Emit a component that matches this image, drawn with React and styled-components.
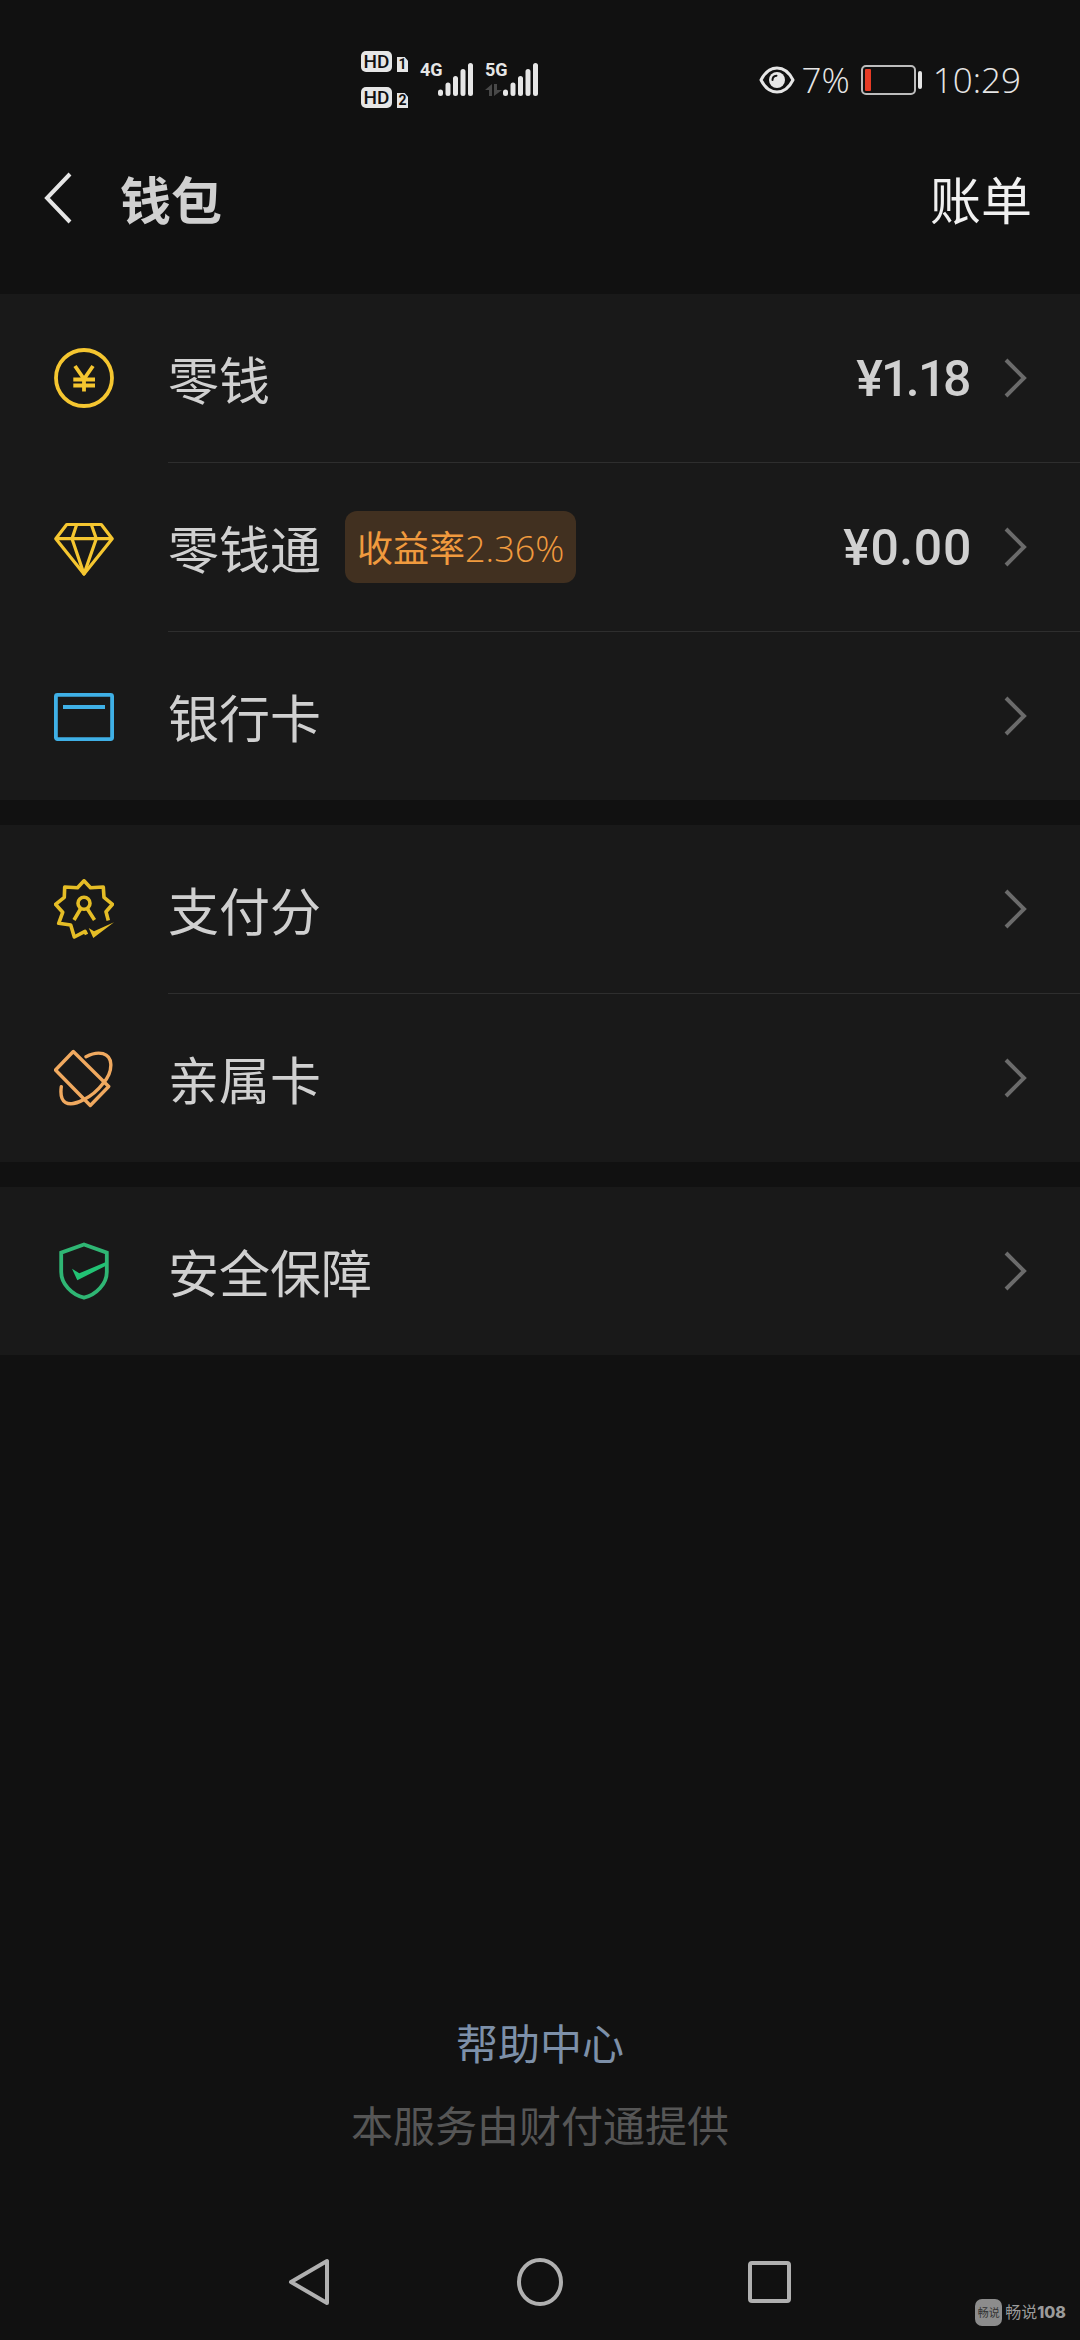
import React from 'react';
import styled, { createGlobalStyle } from 'styled-components';

const GlobalStyle = createGlobalStyle`
    * {
        box-sizing:border-box;
    }

    body {
        margin:0;
        background-color:#111111;
        color:#d0d0d0;
        font-family:"Noto Sans CJK SC", sans-serif;
    }

    button {
        border:0;
        padding:0;
        background:none;
        color:inherit;
        font:inherit;
        cursor:pointer;
    }
`

const Page = styled.div`
    position:relative;
    display:flex;
    flex-direction:column;
    min-height:100vh;
`

/* ---------- status bar ---------- */

const StatusBar = styled.div`
    display:flex;
    align-items:center;
    justify-content:space-between;
    height:120px;
    padding:39px 59px 0 361px;
    color:#e6e6e6;
`

const StatusGroup = styled.div`
    display:flex;
    align-items:center;
    gap:${props => props.$gap || 0}px;
`

const HdList = styled.div`
    display:grid;
    gap:15px;
    margin-right:12px;
`

const HdRow = styled.div`
    display:flex;
    align-items:flex-end;
    gap:5px;
`

const HdTag = styled.span`
    width:31px;
    border-radius:5px;
    background-color:#e6e6e6;
    color:#111111;
    font:500 19px/21px Roboto, sans-serif;
    text-align:center;
`

const SimTag = styled.span`
    width:11px;
    background-color:#e6e6e6;
    clip-path:polygon(0 0, 70% 0, 100% 25%, 100% 100%, 0 100%);
    color:#111111;
    font:700 14px/15px Roboto, sans-serif;
    text-align:center;
`

const Signal = styled.div`
    display:flex;
    margin-right:12px;
`

const SignalType = styled.div`
    display:flex;
    flex-direction:column;
    justify-content:space-between;
    width:18px;
    height:33px;
    font:700 18px/14px "Liberation Sans Narrow", Roboto, sans-serif;
`

const StatusText = styled.span`
    font:300 35px/40px "Open Sans", "Noto Sans", sans-serif;
`

/* ---------- title bar ---------- */

const Header = styled.header`
    display:flex;
    align-items:center;
    height:156px;
    margin-bottom:18px;
    padding:0 48px 0 42px;

    h1 {
        flex:1;
        margin:0 0 0 48px;
        font-size:51px;
        line-height:72px;
        font-weight:700;
    }
`

const BackButton = styled.button`
    display:flex;
    width:30px;
`

const BillButton = styled.button`
    && {
        color:#f0f0f0;
        font-size:51px;
        line-height:72px;
        font-weight:400;
    }
`

/* ---------- list ---------- */

const Sections = styled.main`
    display:grid;
    gap:25px;
`

const Section = styled.section`
    background-color:#191919;
`

const RowButton = styled.button`
    display:flex;
    align-items:flex-start;
    width:100%;
    text-align:left;

    &:last-child > div {
        border-bottom:0;
    }
`

const RowIcon = styled.span`
    display:flex;
    align-items:center;
    width:168px;
    height:168px;
    padding-left:54px;
`

const RowBody = styled.div`
    box-sizing:content-box;
    display:flex;
    flex:1;
    align-items:center;
    height:168px;
    padding-right:53px;
    border-bottom:1px solid #2e2e2e;
`

const RowLabel = styled.span`
    font-size:51px;
    line-height:72px;
`

const RateBadge = styled.span`
    margin-left:24px;
    padding:4px 12px 0;
    border-radius:12px;
    background-color:#413020;
    color:#f09a3e;
    font:300 36px/68px "Open Sans", "Noto Sans CJK SC", sans-serif;
`

const Cjk = styled.span`
    font-weight:400;
`

const Amount = styled.span`
    margin-left:auto;
    padding-top:2px;
    font:500 50px/72px Roboto, sans-serif;
    font-variant-numeric:proportional-nums;
`

const Arrow = styled.svg`
    margin-left:${props => (props.$pushed ? 'auto' : '32px')};
`

/* ---------- bottom ---------- */

const Footer = styled.footer`
    display:grid;
    justify-items:center;
    gap:22px;
    margin-top:auto;
    padding-bottom:70px;
    font-size:42px;
    line-height:60px;

    a {
        color:#7d90a9;
        text-decoration:none;
    }

    p {
        margin:0;
        color:#565656;
    }
`

const SystemNav = styled.nav`
    display:flex;
    align-items:center;
    justify-content:center;
    gap:182px;
    height:116px;

    button {
        display:flex;
    }
`

const Watermark = styled.div`
    position:absolute;
    right:14px;
    bottom:14px;
    display:flex;
    align-items:center;
    gap:3px;
    color:#9a9a9a;
    font-size:16px;
    line-height:27px;

    b {
        font-family:Inter, sans-serif;
        font-weight:800;
    }
`

const WatermarkLogo = styled.span`
    width:27px;
    border-radius:7px;
    background-color:#8c8c8c;
    color:#333333;
    font-size:11px;
    text-align:center;
`

const Icon = ({ color, children }) => (
    <svg width="60" height="60" viewBox="0 0 60 60" fill="none" stroke={color} strokeWidth="3.8" strokeLinejoin="round" aria-hidden="true">
        {children}
    </svg>
)

const icons = {
    coin: (
        <Icon color="#f5c630">
            <circle cx="30" cy="30" r="28" />
            <path d="M21 18 L30 31 L39 18 M19.3 31.5 H41 M19.3 37.5 H41 M30 31 V43.5" strokeLinejoin="miter" />
        </Icon>
    ),
    diamond: (
        <Icon color="#f5c630">
            <path d="M12.7 7.5 H47.3 L58.2 21.7 L30 57 L1.8 21.7 Z M1.8 21.7 H58.2" strokeWidth="3.2" />
            <path d="M22.7 7.5 L18 21.7 L30 57 L42.3 21.7 L37.3 7.5" strokeWidth="3.2" />
        </Icon>
    ),
    card: (
        <Icon color="#3fb0e6">
            <rect x="1.9" y="8.9" width="56.2" height="44.2" rx="1.5" />
            <path d="M9 21 H51" />
        </Icon>
    ),
    score: (
        <Icon color="#e5bd26">
            <path d="M54.3 41.5 L52 32.7 L58.5 25.3 L50 18.3 L49.3 8 L36.5 8.7 L30 1.8 L23.5 8.7 L10.7 8 L10.3 18.3 L1.5 25.3 L8.7 33.3 L4.7 44.3 L16.7 46 L20.3 58 L31 52.3 L32.5 55.5" strokeWidth="3.6" />
            <circle cx="30" cy="24.3" r="6" strokeWidth="3.6" />
            <path d="M26.5 30 L20 41 M33.5 30 L40.5 41" strokeWidth="3.6" />
            <path d="M34.7 49 L40 52.3 L60 43.3 L39.3 59 Z" fill="#e5bd26" stroke="none" />
        </Icon>
    ),
    family: (
        <Icon color="#f0a95f">
            <path d="M19.3 3.5 L1.5 22 L36.3 57.5 L54.7 38.5 Z" strokeWidth="3.4" />
            <path d="M32 8.7 C45 2 56 5 56.8 16 C57.3 25 53 31 49 35.5 M49 35.5 C44 42 37 48 30 51.5 C22 56 15 56.5 11.5 54.5 C7.5 52 6.3 46 7.3 38.7" strokeWidth="3.4" strokeLinecap="round" />
        </Icon>
    ),
    shield: (
        <Icon color="#2fb674">
            <path d="M30 3.5 L52.8 11.7 V31 C52.8 43 42 54 30 56.7 C18 54 7.2 43 7.2 31 V11.7 Z" strokeLinejoin="miter" />
            <path d="M18 27.7 L25.3 32.3 L52 21 V24.7 L23.3 39.3 Z" fill="#22c274" stroke="none" />
        </Icon>
    ),
}

const sections = [
    [
        { icon: 'coin', label: '零钱', amount: '¥1.18' },
        { icon: 'diamond', label: '零钱通', rate: '2.36%', amount: '¥0.00' },
        { icon: 'card', label: '银行卡' },
    ],
    [
        { icon: 'score', label: '支付分' },
        { icon: 'family', label: '亲属卡' },
    ],
    [
        { icon: 'shield', label: '安全保障' },
    ],
]

const Row = ({ icon, label, rate, amount }) => (
    <RowButton type="button">
        <RowIcon>{icons[icon]}</RowIcon>
        <RowBody>
            <RowLabel>{label}</RowLabel>
            {rate && <RateBadge><Cjk>收益率</Cjk>{rate}</RateBadge>}
            {amount && <Amount>{amount}</Amount>}
            <Arrow $pushed={!amount} width="23" height="40" viewBox="0 0 23 40" fill="none" stroke="#6b6b6b" strokeWidth="4" aria-hidden="true">
                <path d="M2 2 L20 20 L2 38" />
            </Arrow>
        </RowBody>
    </RowButton>
)

const SignalBars = () => (
    <svg width="35" height="33" viewBox="0 0 35 33" stroke="#e6e6e6" strokeWidth="5" strokeLinecap="round" aria-hidden="true">
        <path d="M2.5 29 V30.5 M10 22 V30.5 M17.5 15.5 V30.5 M25 8.5 V30.5 M32.5 2.5 V30.5" />
    </svg>
)

const Status = () => (
    <StatusBar>
        <StatusGroup>
            <HdList>
                <HdRow><HdTag>HD</HdTag><SimTag>1</SimTag></HdRow>
                <HdRow><HdTag>HD</HdTag><SimTag>2</SimTag></HdRow>
            </HdList>
            <Signal>
                <SignalType>4G</SignalType>
                <SignalBars />
            </Signal>
            <Signal>
                <SignalType>
                    5G
                    <svg width="17" height="12" viewBox="0 0 17 12" fill="#484848" aria-hidden="true">
                        <path d="M0 6 L7 0 V12 H4 V6 Z M9 0 H12 V6 H17 L9 12 Z" />
                    </svg>
                </SignalType>
                <SignalBars />
            </Signal>
        </StatusGroup>
        <StatusGroup $gap={7}>
            <svg width="36" height="28" viewBox="0 0 36 28" fill="none" aria-hidden="true">
                <path d="M2 14 C10 -2 26 -2 34 14 C26 30 10 30 2 14 Z" stroke="#e6e6e6" strokeWidth="3" strokeLinejoin="round" />
                <circle cx="18" cy="14" r="8" fill="#e6e6e6" />
                <path d="M13.5 14 C13.5 11.5 15 10 17.5 9.7" stroke="#111111" strokeWidth="2" strokeLinecap="round" />
            </svg>
            <StatusText>7%</StatusText>
            <svg width="69" height="30" viewBox="-4 0 69 30" fill="none" aria-hidden="true">
                <rect x="1" y="1" width="53" height="28" rx="4" stroke="#bdbdbd" strokeWidth="2" />
                <rect x="4" y="4" width="6" height="22" rx="1" fill="#e63b25" />
                <rect x="57" y="6" width="4" height="18" rx="2" fill="#e6e6e6" />
            </svg>
            <StatusText>10:29</StatusText>
        </StatusGroup>
    </StatusBar>
)

const App = () => {
    return(
        <>
            <GlobalStyle />
            <Page>
                <Status />
                <Header>
                    <BackButton type="button" aria-label="返回">
                        <svg width="30" height="52" viewBox="0 0 30 52" fill="none" stroke="#e6e6e6" strokeWidth="4">
                            <path d="M28 2 L5 26 L28 50" />
                        </svg>
                    </BackButton>
                    <h1>钱包</h1>
                    <BillButton type="button">账单</BillButton>
                </Header>
                <Sections>
                    {sections.map((rows, index) => (
                        <Section key={index}>
                            {rows.map(row => <Row key={row.icon} {...row} />)}
                        </Section>
                    ))}
                </Sections>
                <Footer>
                    <a href="#help">帮助中心</a>
                    <p>本服务由财付通提供</p>
                </Footer>
                <SystemNav>
                    <button type="button" aria-label="后退">
                        <svg width="48" height="48" viewBox="0 0 48 48" fill="none" stroke="#b0b0b0" strokeWidth="4" strokeLinejoin="round">
                            <path d="M41 3 V45 L5 24 Z" />
                        </svg>
                    </button>
                    <button type="button" aria-label="主页">
                        <svg width="48" height="48" viewBox="0 0 48 48" fill="none" stroke="#b0b0b0" strokeWidth="4">
                            <ellipse cx="24" cy="24" rx="21" ry="22" />
                        </svg>
                    </button>
                    <button type="button" aria-label="最近任务">
                        <svg width="48" height="48" viewBox="0 0 48 48" fill="none" stroke="#b0b0b0" strokeWidth="4">
                            <rect x="4" y="5" width="39" height="38" rx="2" />
                        </svg>
                    </button>
                </SystemNav>
                <Watermark>
                    <WatermarkLogo>畅说</WatermarkLogo>
                    <span>畅说<b>108</b></span>
                </Watermark>
            </Page>
        </>
    )
};

export default App;
